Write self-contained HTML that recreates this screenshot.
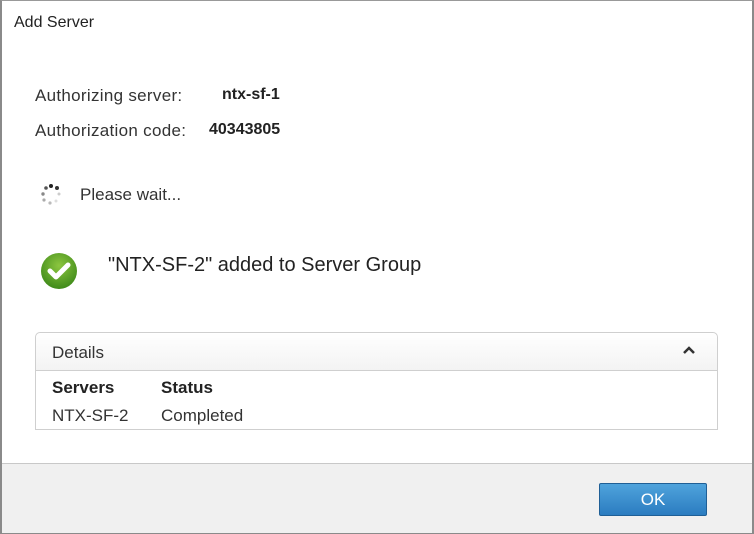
<!DOCTYPE html>
<html><head><style>
body{margin:0;width:754px;height:534px;overflow:hidden;font-family:"Liberation Sans",sans-serif;color:#333;background:#fff}
.win{position:absolute;left:0;top:0;width:750px;height:531px;border-left:2px solid #8a8a8a;border-right:2px solid #8a8a8a;border-bottom:2px solid #8a8a8a;border-top:1px solid #999;background:#fff}
.t{position:absolute;white-space:nowrap}
.foot{position:absolute;left:0;top:462px;width:750px;height:69px;background:#f0f0f0;border-top:1px solid #c8c8c8}
.ok{position:absolute;left:597px;top:19px;width:106px;height:31px;border:1px solid #1f5f96;border-radius:2px;background:linear-gradient(#4fa3dc,#2b7cc0);color:#fff;font-size:17px;text-align:center;line-height:31px}
.box{position:absolute;left:33px;top:331px;width:681px;height:96px;border:1px solid #cfcfcf;border-radius:5px 5px 0 0}
.hd{height:37px;border-bottom:1px solid #cfcfcf;background:linear-gradient(#fff,#f3f3f3);border-radius:5px 5px 0 0}
</style></head><body>
<div class="win">
<div class="t" style="left:12px;top:13px;font-size:16px;color:#222">Add Server</div>
<div class="t" style="left:33px;top:85px;font-size:17px;letter-spacing:0.3px">Authorizing server:</div>
<div class="t" style="left:220px;top:85px;font-size:16px;font-weight:bold;color:#222">ntx-sf-1</div>
<div class="t" style="left:33px;top:120px;font-size:17px;letter-spacing:0.3px">Authorization code:</div>
<div class="t" style="left:207px;top:120px;font-size:16px;font-weight:bold;color:#222">40343805</div>
<svg class="t" style="left:36px;top:181px" width="26" height="26" viewBox="0 0 26 26">
<circle cx="13" cy="4" r="2" fill="#222"/><circle cx="19" cy="6" r="2" fill="#333"/><circle cx="8" cy="6" r="1.8" fill="#555"/><circle cx="5" cy="12" r="1.7" fill="#888"/><circle cx="21" cy="12" r="1.5" fill="#ccc"/><circle cx="6" cy="18" r="1.6" fill="#aaa"/><circle cx="12" cy="21" r="1.6" fill="#bbb"/><circle cx="18" cy="19" r="1.5" fill="#ddd"/></svg>
<div class="t" style="left:78px;top:184px;font-size:17px">Please wait...</div>
<svg class="t" style="left:38px;top:251px" width="38" height="38" viewBox="0 0 38 38">
<defs><radialGradient id="g" cx="50%" cy="35%" r="65%"><stop offset="0" stop-color="#8cc63f"/><stop offset="1" stop-color="#3f8a1a"/></radialGradient></defs>
<circle cx="19" cy="19" r="18" fill="url(#g)"/><path d="M10 19l6 6 12-12" stroke="#fff" stroke-width="5" fill="none" stroke-linecap="round" stroke-linejoin="round"/></svg>
<div class="t" style="left:106px;top:253px;font-size:20px;color:#222">"NTX-SF-2" added to Server Group</div>
<div class="box"><div class="hd"><div class="t" style="left:16px;top:10px;font-size:17px">Details</div>
<svg class="t" style="left:646px;top:12px" width="14" height="10"><path d="M2 8l5-5 5 5" stroke="#333" stroke-width="2.5" fill="none"/></svg></div>
<div class="t" style="left:16px;top:45px;font-size:17px;font-weight:bold;color:#222">Servers</div>
<div class="t" style="left:125px;top:45px;font-size:17px;font-weight:bold;color:#222">Status</div>
<div class="t" style="left:16px;top:73px;font-size:17px">NTX-SF-2</div>
<div class="t" style="left:125px;top:73px;font-size:17px">Completed</div>
</div>
<div class="foot"><div class="ok">OK</div></div>
</div>
</body></html>
